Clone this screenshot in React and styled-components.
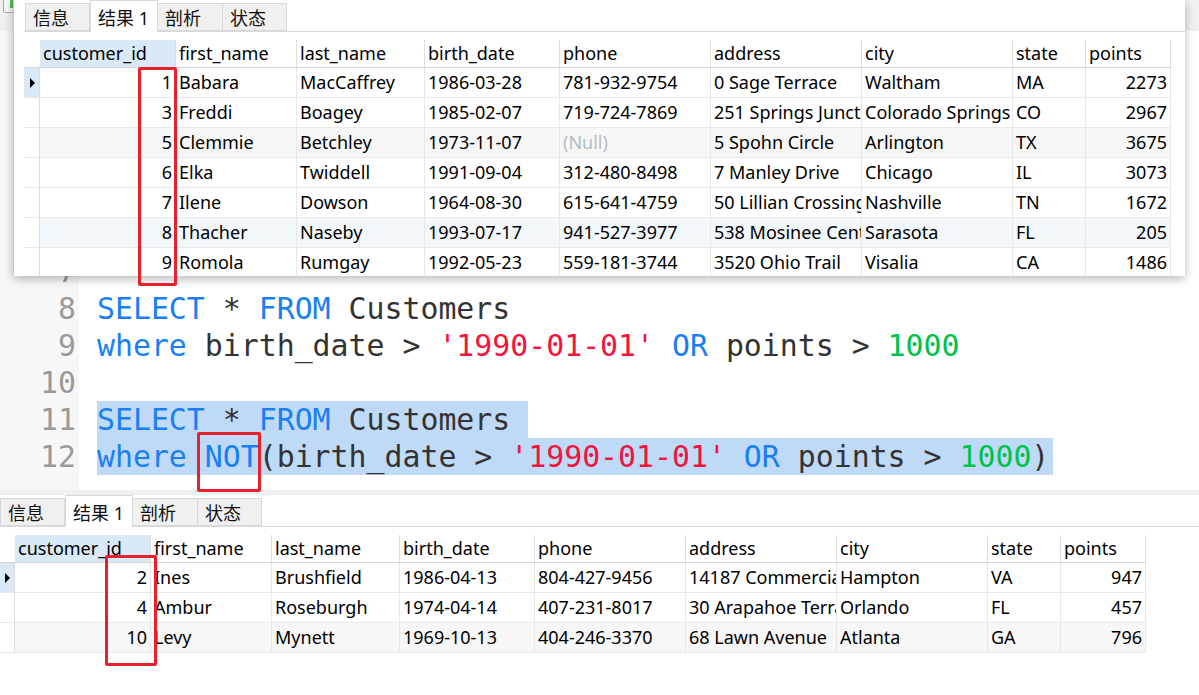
import React from 'react'
import styled, { createGlobalStyle } from 'styled-components'

const GlobalStyle = createGlobalStyle`
  html, body { margin: 0; padding: 0; background: #fff; }
  body { font-family: "Noto Sans", "Noto Sans CJK SC", sans-serif; }
`

const UI_FONT = `"Noto Sans", "Noto Sans CJK SC", sans-serif`
const CODE_FONT = `"DejaVu Sans Mono", "Liberation Mono", monospace`

const COLUMNS = [
  { key: 'customer_id', w: 136, num: true },
  { key: 'first_name', w: 121 },
  { key: 'last_name', w: 128 },
  { key: 'birth_date', w: 135 },
  { key: 'phone', w: 151 },
  { key: 'address', w: 151 },
  { key: 'city', w: 151 },
  { key: 'state', w: 73 },
  { key: 'points', w: 85, num: true },
]

const TOP_ROWS = [
  ['1', 'Babara', 'MacCaffrey', '1986-03-28', '781-932-9754', '0 Sage Terrace', 'Waltham', 'MA', '2273'],
  ['3', 'Freddi', 'Boagey', '1985-02-07', '719-724-7869', '251 Springs Junction', 'Colorado Springs', 'CO', '2967'],
  ['5', 'Clemmie', 'Betchley', '1973-11-07', null, '5 Spohn Circle', 'Arlington', 'TX', '3675'],
  ['6', 'Elka', 'Twiddell', '1991-09-04', '312-480-8498', '7 Manley Drive', 'Chicago', 'IL', '3073'],
  ['7', 'Ilene', 'Dowson', '1964-08-30', '615-641-4759', '50 Lillian Crossing', 'Nashville', 'TN', '1672'],
  ['8', 'Thacher', 'Naseby', '1993-07-17', '941-527-3977', '538 Mosinee Center', 'Sarasota', 'FL', '205'],
  ['9', 'Romola', 'Rumgay', '1992-05-23', '559-181-3744', '3520 Ohio Trail', 'Visalia', 'CA', '1486'],
]
const TOP_TINTS = ['', '', 'gray', '', '', 'blue', '']

const BOTTOM_ROWS = [
  ['2', 'Ines', 'Brushfield', '1986-04-13', '804-427-9456', '14187 Commercial Trail', 'Hampton', 'VA', '947'],
  ['4', 'Ambur', 'Roseburgh', '1974-04-14', '407-231-8017', '30 Arapahoe Terrace', 'Orlando', 'FL', '457'],
  ['10', 'Levy', 'Mynett', '1969-10-13', '404-246-3370', '68 Lawn Avenue', 'Atlanta', 'GA', '796'],
]
const BOTTOM_TINTS = ['', '', 'gray']

const TINTS = { gray: '#f7f7f7', blue: '#f2f7fc', '': '#fff' }

const Page = styled.div`
  position: relative;
  width: 1199px;
  height: 695px;
  overflow: hidden;
  background: #fff;
  display: flex;
  flex-direction: column;
`

/* ---------- editor ---------- */

const Editor = styled.div`
  height: 490px;
  display: flex;
  flex-direction: column;
  background: linear-gradient(to right, #f7f7f7 79px, #fff 79px);
`

const Toolbar = styled.div`
  height: 31px;
  flex-shrink: 0;
  background: #f0f0f0;
  padding-left: 3px;
`

const ToolButton = styled.div`
  width: 30px;
  height: 12px;
  border: 1px solid #a9a9a9;
  border-top: none;
  border-radius: 0 0 2px 2px;
  background: #f7f7f7;
  padding-left: 6px;
`

const RunMark = styled.div`
  width: 6px;
  height: 8px;
  background: #4cbb4c;
`

const Line = styled.div`
  display: flex;
  height: 37px;
  line-height: 37px;
  font-family: ${CODE_FONT};
  font-size: 29.85px;
  white-space: pre;
  color: #333;
`

const LineNo = styled.div`
  width: 76px;
  text-align: right;
  color: #9a9a9a;
  flex-shrink: 0;
`

const Code = styled.div`
  padding-left: 21px;
`

const Sel = styled.span`
  display: inline-block;
  background: #bfdaf6;
  padding-right: ${p => p.$pad || 0}px;
`

const Kw = styled.span` color: #1a7ff2; `
const Str = styled.span` color: #f5123c; `
const Num = styled.span` color: #00c24a; `

const Separator = styled.div`
  height: 5px;
  background: #f0f0f0;
  flex-shrink: 0;
`

/* ---------- result panels ---------- */

const FloatingWindow = styled.div`
  position: absolute;
  left: 13px;
  top: 0;
  width: 1172px;
  height: 276px;
  background: #fff;
  border-left: 1px solid #c9c9c9;
  box-shadow: 0 3px 9px rgba(0, 0, 0, 0.28);
  padding-left: 10px;
  box-sizing: border-box;
  overflow: hidden;
`

const Panel = styled.div`
  display: flex;
  flex-direction: column;
  font-family: ${UI_FONT};
`

const TabBar = styled.div`
  display: flex;
  align-items: flex-end;
  height: 31px;
  padding-left: ${p => p.$inset}px;
  border-bottom: 1px solid #d9d9d9;
`

const Tab = styled.div`
  box-sizing: border-box;
  width: ${p => p.$w}px;
  height: ${p => (p.$active ? 32 : 28)}px;
  margin-bottom: ${p => (p.$active ? -1 : 0)}px;
  padding-left: 7px;
  display: flex;
  align-items: center;
  font-size: 18px;
  color: #111;
  background: ${p => (p.$active ? '#fff' : '#f0f0f0')};
  border: 1px solid #d9d9d9;
  border-bottom: ${p => (p.$active ? 'none' : '1px solid #d9d9d9')};
  border-left: ${p => (p.$first || p.$active ? '1px solid #d9d9d9' : 'none')};
`

const Grid = styled.div`
  display: grid;
  grid-template-columns: ${p => p.$cols};
  margin-top: 8px;
  font-size: 18px;
  color: #000;
  width: max-content;
`

const HeadCell = styled.div`
  height: 28px;
  box-sizing: border-box;
  padding: 0 3px;
  line-height: 27px;
  background: ${p => (p.$selected ? '#d9e9f7' : '#fff')};
  border-right: 1px solid #dedede;
  border-bottom: 1px solid #d6d6d6;
  white-space: nowrap;
  overflow: hidden;
`

const CornerCell = styled.div`
  height: 28px;
  border-bottom: 1px solid #d6d6d6;
  box-sizing: border-box;
`

const Cell = styled.div`
  height: 30px;
  box-sizing: border-box;
  padding: 0 3px;
  line-height: 29px;
  background: ${p => TINTS[p.$tint]};
  border-right: 1px solid #e8e8e8;
  border-bottom: 1px solid #e8e8e8;
  text-align: ${p => (p.$num ? 'right' : 'left')};
  color: ${p => (p.$null ? '#b3bccb' : '#000')};
  white-space: nowrap;
  overflow: hidden;
`

const Indicator = styled.div`
  height: 30px;
  box-sizing: border-box;
  background: ${p => (p.$current ? '#d9e9f7' : '#fff')};
  border-right: 1px solid #dcdcdc;
  border-bottom: 1px solid #e8e8e8;
  display: flex;
  align-items: center;
  justify-content: center;
`

const Arrow = styled.div`
  width: 0;
  height: 0;
  border-top: 5px solid transparent;
  border-bottom: 5px solid transparent;
  border-left: 5px solid #000;
  margin-left: 1px;
`

const Marker = styled.div`
  position: absolute;
  left: ${p => p.$x}px;
  top: ${p => p.$y}px;
  width: ${p => p.$w}px;
  height: ${p => p.$h}px;
  box-sizing: border-box;
  border: 3px solid #e8202b;
  border-radius: 2px;
  pointer-events: none;
`

const TABS = [
  { label: '信息', w: 65 },
  { label: '结果 1', w: 68, active: true },
  { label: '剖析', w: 65 },
  { label: '状态', w: 64 },
]

const ResultPanel = ({ rows, tints, inset, indicator }) => {
  const cols = `${indicator}px ` + COLUMNS.map(c => `${c.w}px`).join(' ')
  return (
    <Panel>
      <TabBar $inset={inset}>
        {TABS.map((t, i) => (
          <Tab key={t.label} $w={t.w} $active={t.active} $first={i === 0}>{t.label}</Tab>
        ))}
      </TabBar>
      <Grid $cols={cols}>
        <CornerCell />
        {COLUMNS.map((c, i) => (
          <HeadCell key={c.key} $selected={i === 0}>{c.key}</HeadCell>
        ))}
        {rows.map((row, r) => (
          <React.Fragment key={r}>
            <Indicator $current={r === 0}>{r === 0 && <Arrow />}</Indicator>
            {row.map((v, i) => (
              <Cell key={i} $num={COLUMNS[i].num} $tint={tints[r]} $null={v === null}>
                {v === null ? '(Null)' : v}
              </Cell>
            ))}
          </React.Fragment>
        ))}
      </Grid>
    </Panel>
  )
}

const EMPTY_LINES = [1, 2, 3, 4, 5, 6, 7]

export default function App() {
  return (
    <>
      <GlobalStyle />
      <Page>
        <Editor>
          <Toolbar>
            <ToolButton><RunMark /></ToolButton>
          </Toolbar>
          {EMPTY_LINES.map(n => (
            <Line key={n}><LineNo>{n}</LineNo><Code /></Line>
          ))}
          <Line>
            <LineNo>8</LineNo>
            <Code><Kw>SELECT</Kw> * <Kw>FROM</Kw> Customers</Code>
          </Line>
          <Line>
            <LineNo>9</LineNo>
            <Code><Kw>where</Kw> birth_date &gt; <Str>'1990-01-01'</Str> <Kw>OR</Kw> points &gt; <Num>1000</Num></Code>
          </Line>
          <Line>
            <LineNo>10</LineNo>
            <Code />
          </Line>
          <Line>
            <LineNo>11</LineNo>
            <Code><Sel><Kw>SELECT</Kw> * <Kw>FROM</Kw> Customers </Sel></Code>
          </Line>
          <Line>
            <LineNo>12</LineNo>
            <Code><Sel $pad={4}><Kw>where</Kw> <Kw>NOT</Kw>(birth_date &gt; <Str>'1990-01-01'</Str> <Kw>OR</Kw> points &gt; <Num>1000</Num>)</Sel></Code>
          </Line>
        </Editor>
        <Separator />
        <ResultPanel rows={BOTTOM_ROWS} tints={BOTTOM_TINTS} inset={0} indicator={15} />

        <FloatingWindow>
          <ResultPanel rows={TOP_ROWS} tints={TOP_TINTS} inset={1} indicator={16} />
        </FloatingWindow>

        <Marker $x={138} $y={67} $w={39} $h={219} />
        <Marker $x={197} $y={432} $w={64} $h={60} />
        <Marker $x={105} $y={555} $w={52} $h={111} />
      </Page>
    </>
  )
}
